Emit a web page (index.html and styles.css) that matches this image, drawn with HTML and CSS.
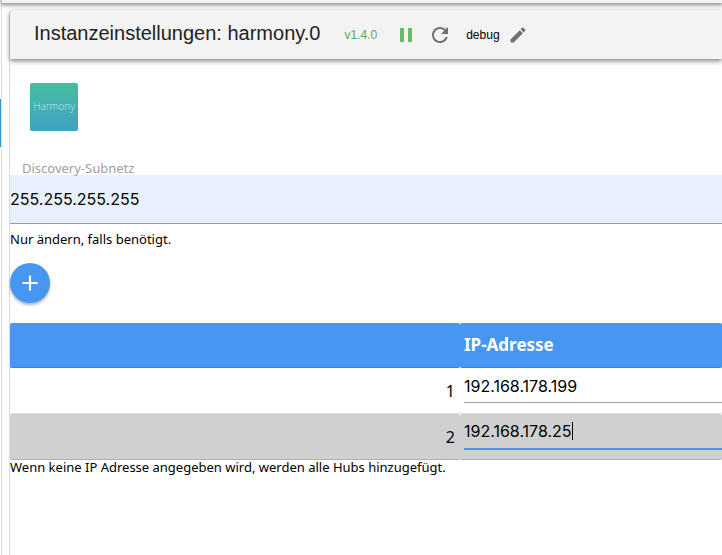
FILE: index.html
```html
<!DOCTYPE html>
<html lang="de">
<head>
    <meta charset="utf-8">
    <meta name="viewport" content="width=device-width, initial-scale=1">
    <title>Instanzeinstellungen: harmony.0</title>
    <link rel="stylesheet" href="styles.css">
</head>
<body>

    <div class="side"><div class="side-active"></div></div>

    <div class="main">
        <div class="appbar"></div>

        <div class="dialog">
            <header class="toolbar">
                <h1>Instanzeinstellungen: harmony.0</h1>
                <span class="version">v1.4.0</span>
                <button type="button" class="icon-btn pause" aria-label="Pause">
                    <svg viewBox="0 0 24 24"><path d="M6 19h4V5H6v14zm8-14v14h4V5h-4z"/></svg>
                </button>
                <button type="button" class="icon-btn refresh" aria-label="Neu starten">
                    <svg viewBox="0 0 24 24"><path d="M17.65 6.35C16.2 4.9 14.21 4 12 4c-4.42 0-7.99 3.58-7.99 8s3.57 8 7.99 8c3.73 0 6.84-2.55 7.73-6h-2.08c-.82 2.33-3.04 4-5.65 4-3.31 0-6-2.69-6-6s2.69-6 6-6c1.66 0 3.14.69 4.22 1.78L13 11h7V4l-2.35 2.35z"/></svg>
                </button>
                <span class="loglevel">debug</span>
                <button type="button" class="icon-btn edit" aria-label="Bearbeiten">
                    <svg viewBox="0 0 24 24"><path d="M3 17.25V21h3.75L17.81 9.94l-3.75-3.75L3 17.25zM20.71 7.04c.39-.39.39-1.02 0-1.41l-2.34-2.34c-.39-.39-1.02-.39-1.41 0l-1.83 1.83 3.75 3.75 1.83-1.83z"/></svg>
                </button>
            </header>

            <div class="content">
                <div class="logo">Harmony</div>

                <div class="field">
                    <label for="subnet">Discovery-Subnetz</label>
                    <input type="text" id="subnet" value="255.255.255.255">
                </div>
                <p class="note">Nur ändern, falls benötigt.</p>

                <button type="button" class="add" aria-label="Hinzufügen">
                    <svg viewBox="0 0 24 24"><path d="M19 13h-6v6h-2v-6H5v-2h6V5h2v6h6v2z"/></svg>
                </button>

                <table class="devices">
                    <thead>
                        <tr><th class="num"></th><th>IP-Adresse</th></tr>
                    </thead>
                    <tbody>
                        <tr>
                            <td class="num">1</td>
                            <td class="ip"><input type="text" value="192.168.178.199" aria-label="IP-Adresse 1"></td>
                        </tr>
                        <tr>
                            <td class="num">2</td>
                            <td class="ip"><div class="edit-line"><input type="text" value="192.168.178.25" size="14" aria-label="IP-Adresse 2"><span class="caret"></span></div></td>
                        </tr>
                    </tbody>
                </table>
                <p class="note">Wenn keine IP Adresse angegeben wird, werden alle Hubs hinzugefügt.</p>
            </div>
        </div>
    </div>

</body>
</html>
```
FILE: styles.css
```css
*{
    box-sizing: border-box;
}
body{
    margin: 0;
    display: flex;
    min-height: 100vh;
    overflow: hidden;
    background: #fff;
    color: #000;
    font-family: "Noto Sans", "Lucida Grande", sans-serif;
}
h1, p{
    margin: 0;
    font-weight: normal;
}
input, button{
    border: 0;
    padding: 0;
    background: none;
    outline: none;
}

.side{
    width: 2px;
    padding-top: 99px;
    border-right: 1px solid #dcdcdc;
}
.side-active{
    width: 1px;
    height: 48px;
    background: #3399cc;
}
.main{
    flex: 1;
    min-width: 0;
    display: flex;
    flex-direction: column;
}
.appbar{
    position: relative;
    z-index: 1;
    height: 3px;
    background: #f3f3f3;
    box-shadow: 0 1px 4px 1px rgba(0,0,0,.5);
}

.dialog{
    flex: 1;
    margin: 7px 0 0 7px;
    border-left: 1px solid #dcdcdc;
    border-radius: 4px 0 0 0;
}
.toolbar{
    display: flex;
    align-items: center;
    height: 49px;
    padding: 0 24px;
    background: #f3f3f3;
    border-radius: 4px 0 0 0;
    box-shadow: 0 2px 5px rgba(0,0,0,.5);
    font-family: "Liberation Sans", Arial, sans-serif;
}
.toolbar h1{
    font-size: 20px;
    line-height: 24px;
    padding-bottom: 4px;
    color: #222;
}
.toolbar svg{
    display: block;
    width: 100%;
    height: 100%;
}
.version{
    margin-left: 24px;
    font-size: 12px;
    line-height: 16px;
    color: #55aa5a;
}
.loglevel{
    margin-left: 14px;
    font-size: 12px;
    line-height: 16px;
}
.icon-btn{
    width: 24px;
    height: 24px;
    fill: #707070;
}
.pause{
    margin-left: 17px;
    fill: #66bb6a;
}
.refresh{
    margin-left: 10px;
}
.edit{
    width: 20px;
    height: 20px;
    margin-left: 8px;
}

.content{
    padding-top: 24px;
}
.logo{
    width: 48px;
    height: 48px;
    margin-left: 20px;
    border-radius: 2px;
    background: linear-gradient(#45bd9d, #41a1c6);
    color: rgba(255,255,255,.7);
    font: 300 10px/46px "Open Sans", sans-serif;
    text-align: center;
}

.field{
    margin-top: 30px;
}
.field label{
    display: block;
    padding-left: 12px;
    font-size: 13px;
    line-height: 14px;
    color: #9e9e9e;
}
.field input{
    display: block;
    width: 100%;
    height: 49px;
    background: #e8f0fe;
    border-bottom: 1px solid #9e9e9e;
}
.field input,
.devices input{
    color: #000;
    font-family: Inter, "Helvetica Neue", sans-serif;
    font-size: 16px;
}
.note{
    font-size: 13px;
    line-height: 14px;
}
.field + .note{
    margin-top: 8px;
}

.add{
    display: flex;
    align-items: center;
    justify-content: center;
    width: 40px;
    height: 40px;
    margin: 17px 0 20px;
    border-radius: 50%;
    background: #4696f2;
    box-shadow: 0 2px 3px rgba(0,0,0,.3);
    fill: #fff;
}
.add svg{
    width: 26px;
    height: 26px;
}

.devices{
    width: 100%;
    table-layout: fixed;
    border-spacing: 0;
    font-size: 16px;
}
.devices th,
.devices td{
    height: 46px;
    padding: 0 0 0 4px;
    text-align: left;
    border-radius: 2px;
    border-bottom: 1px solid #dcdcdc;
}
.devices th{
    height: 45px;
    font-size: 17px;
    line-height: 20px;
    color: #fff;
    background: #4696f2;
    border-bottom-color: #3a80d6;
}
.devices .num{
    width: 450px;
    padding-right: 5px;
    text-align: right;
}
.devices .ip{
    padding-bottom: 9px;
}
.devices tbody tr:nth-child(even) td{
    background: #d0d0d0;
    border-bottom-color: #b0b0b0;
}
.devices input{
    display: block;
    height: 34px;
}
.devices td > input{
    width: 100%;
    border-bottom: 1px solid #9e9e9e;
}
.edit-line{
    display: flex;
    align-items: center;
    height: 35px;
    border-bottom: 2px solid #4696f2;
}
.edit-line input{
    field-sizing: content;
}
.caret{
    width: 1px;
    height: 18px;
    background: #000;
}
```
